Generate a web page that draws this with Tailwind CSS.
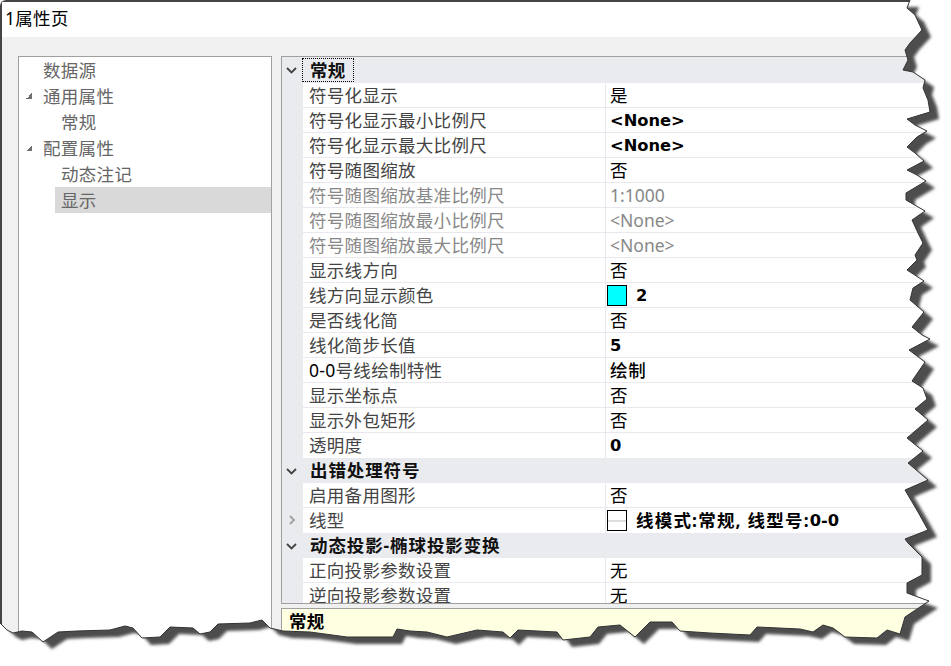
<!DOCTYPE html>
<html lang="zh">
<head>
<meta charset="UTF-8" />
<title>1属性页</title>
<script src="https://cdn.jsdelivr.net/npm/@tailwindcss/browser@4"></script>
</head>
<body class="bg-white">
<div class="relative w-[951px] h-[666px] overflow-hidden font-['Noto_Sans','Noto_Sans_CJK_SC',sans-serif] text-[17.5px] tracking-[0.3px] leading-[25px] text-[#333]">
  <div class="w-[951px] h-[666px] flex flex-col border-l-2 border-t-2 border-[#444] rounded-tl-md">
    <!-- title -->
    <div class="h-[35px] shrink-0 bg-white pl-[3px] pt-[4px] text-black">1属性页</div>
    <!-- body -->
    <div class="flex-1 bg-[#f0f0f0] pl-[16px] pt-[19px] flex gap-[9px]">
      <!-- tree -->
      <div class="w-[254px] h-[600px] shrink-0 bg-white border border-[#a0a0a0] text-[#666] leading-[27px]">
        <div class="h-[26px] pl-[24px]">数据源</div>
        <div class="h-[26px] pl-[24px] relative"><span class="absolute left-[7px] top-[10px] w-[6px] h-[6px] bg-[linear-gradient(135deg,transparent_50%,#707070_50%)]"></span>通用属性</div>
        <div class="h-[26px] pl-[42px]">常规</div>
        <div class="h-[26px] pl-[24px] relative"><span class="absolute left-[7px] top-[10px] w-[6px] h-[6px] bg-[linear-gradient(135deg,transparent_50%,#707070_50%)]"></span>配置属性</div>
        <div class="h-[26px] pl-[42px]">动态注记</div>
        <div class="h-[26px] ml-[36px] pl-[6px] bg-[#d9d9d9]">显示</div>
      </div>
      <!-- grid + description -->
      <div class="w-[660px] shrink-0 flex flex-col">
        <div class="h-[548px] bg-[#e9ebef] border border-[#a0a0a0] overflow-hidden text-[#444]">
          <div class="h-[26px] flex items-center font-bold text-[#111]"><svg class="w-[20px] h-[10px]" viewBox="0 0 20 10"><path d="M5 3l4.500 4.500 4.500-4.500" fill="none" stroke="#444" stroke-width="1.800"/></svg><span class="border border-dotted border-black h-[24px] px-[7px] leading-[23px]">常规</span></div>
          <div class="ml-[21px] bg-white">
            <div class="h-[25px] flex border-b border-[#e8e8ee]"><div class="w-[302px] pl-[6px]">符号化显示</div><div class="border-l border-[#e8e8ee] pl-[4px] text-black">是</div></div>
            <div class="h-[25px] flex border-b border-[#e8e8ee]"><div class="w-[302px] pl-[6px]">符号化显示最小比例尺</div><div class="border-l border-[#e8e8ee] pl-[4px] text-black font-bold font-['DejaVu_Sans'] text-[16.3px] tracking-normal">&lt;None&gt;</div></div>
            <div class="h-[25px] flex border-b border-[#e8e8ee]"><div class="w-[302px] pl-[6px]">符号化显示最大比例尺</div><div class="border-l border-[#e8e8ee] pl-[4px] text-black font-bold font-['DejaVu_Sans'] text-[16.3px] tracking-normal">&lt;None&gt;</div></div>
            <div class="h-[25px] flex border-b border-[#e8e8ee]"><div class="w-[302px] pl-[6px]">符号随图缩放</div><div class="border-l border-[#e8e8ee] pl-[4px] text-black">否</div></div>
            <div class="h-[25px] flex border-b border-[#e8e8ee] text-[#888]"><div class="w-[302px] pl-[6px]">符号随图缩放基准比例尺</div><div class="border-l border-[#e8e8ee] pl-[4px] tracking-normal">1:1000</div></div>
            <div class="h-[25px] flex border-b border-[#e8e8ee] text-[#888]"><div class="w-[302px] pl-[6px]">符号随图缩放最小比例尺</div><div class="border-l border-[#e8e8ee] pl-[4px] tracking-normal">&lt;None&gt;</div></div>
            <div class="h-[25px] flex border-b border-[#e8e8ee] text-[#888]"><div class="w-[302px] pl-[6px]">符号随图缩放最大比例尺</div><div class="border-l border-[#e8e8ee] pl-[4px] tracking-normal">&lt;None&gt;</div></div>
            <div class="h-[25px] flex border-b border-[#e8e8ee]"><div class="w-[302px] pl-[6px]">显示线方向</div><div class="border-l border-[#e8e8ee] pl-[4px] text-black">否</div></div>
            <div class="h-[25px] flex border-b border-[#e8e8ee]"><div class="w-[302px] pl-[6px]">线方向显示颜色</div><div class="border-l border-[#e8e8ee] pl-[1px] flex items-center text-black font-bold font-['DejaVu_Sans'] text-[16.3px]"><span class="w-[20px] h-[21px] bg-[#00ffff] border border-black mr-[9px]"></span>2</div></div>
            <div class="h-[25px] flex border-b border-[#e8e8ee]"><div class="w-[302px] pl-[6px]">是否线化简</div><div class="border-l border-[#e8e8ee] pl-[4px] text-black">否</div></div>
            <div class="h-[25px] flex border-b border-[#e8e8ee]"><div class="w-[302px] pl-[6px]">线化简步长值</div><div class="border-l border-[#e8e8ee] pl-[4px] text-black font-bold font-['DejaVu_Sans'] text-[16.3px]">5</div></div>
            <div class="h-[25px] flex border-b border-[#e8e8ee]"><div class="w-[302px] pl-[6px]"><span class="text-black">0-0</span>号线绘制特性</div><div class="border-l border-[#e8e8ee] pl-[4px] text-black font-medium tracking-[0.7px]">绘制</div></div>
            <div class="h-[25px] flex border-b border-[#e8e8ee]"><div class="w-[302px] pl-[6px]">显示坐标点</div><div class="border-l border-[#e8e8ee] pl-[4px] text-black">否</div></div>
            <div class="h-[25px] flex border-b border-[#e8e8ee]"><div class="w-[302px] pl-[6px]">显示外包矩形</div><div class="border-l border-[#e8e8ee] pl-[4px] text-black">否</div></div>
            <div class="h-[25px] flex"><div class="w-[302px] pl-[6px]">透明度</div><div class="border-l border-[#e8e8ee] pl-[4px] text-black font-bold font-['DejaVu_Sans'] text-[16.3px]">0</div></div>
          </div>
          <div class="h-[25px] flex items-center font-bold text-[#111] tracking-[0.9px]"><svg class="w-[20px] h-[10px]" viewBox="0 0 20 10"><path d="M5 3l4.500 4.500 4.500-4.500" fill="none" stroke="#444" stroke-width="1.800"/></svg><span class="pl-[8px]">出错处理符号</span></div>
          <div class="ml-[21px] bg-white">
            <div class="h-[25px] flex border-b border-[#e8e8ee]"><div class="w-[302px] pl-[6px]">启用备用图形</div><div class="border-l border-[#e8e8ee] pl-[4px] text-black">否</div></div>
            <div class="h-[25px] flex relative"><svg class="absolute left-[-21px] top-[7px] w-[21px] h-[10px]" viewBox="0 0 21 10"><path d="M8 1l4 4-4 4" fill="none" stroke="#a0a0a0" stroke-width="1.800"/></svg><div class="w-[302px] pl-[6px]">线型</div><div class="border-l border-[#e8e8ee] pl-[1px] flex items-center text-black font-bold tracking-[1.2px]"><span class="w-[20px] h-[21px] border border-black mr-[9px] flex items-center"><span class="w-full h-[2px] bg-[#ddd]"></span></span>线模式:常规, 线型号:<span class="font-['DejaVu_Sans'] text-[16.3px] tracking-normal">0-0</span></div></div>
          </div>
          <div class="h-[25px] flex items-center font-bold text-[#111] tracking-[0.9px]"><svg class="w-[20px] h-[10px]" viewBox="0 0 20 10"><path d="M5 3l4.500 4.500 4.500-4.500" fill="none" stroke="#444" stroke-width="1.800"/></svg><span class="pl-[8px]">动态投影-椭球投影变换</span></div>
          <div class="ml-[21px] bg-white">
            <div class="h-[25px] flex border-b border-[#e8e8ee]"><div class="w-[302px] pl-[6px]">正向投影参数设置</div><div class="border-l border-[#e8e8ee] pl-[4px] text-black">无</div></div>
            <div class="h-[25px] flex"><div class="w-[302px] pl-[6px]">逆向投影参数设置</div><div class="border-l border-[#e8e8ee] pl-[4px] text-black">无</div></div>
          </div>
        </div>
        <div class="mt-[4px] h-[40px] bg-[#ffffe1] border border-[#a0a0a0] pl-[7px] font-bold text-black">常规</div>
      </div>
    </div>
  </div>
  <!-- torn paper edge over the window -->
  <svg class="absolute left-0 top-0" width="951" height="666" viewBox="0 0 951 666">
    <defs>
      <path id="edge" d="M0 0H910L907 8L915 15L922 30L910 43L905 50L908 60L903 70L913 72L925 80L923 88L928 100L930 112L907 119L915 125L927 131L917 137L907 147L915 153L924 161L907 170L917 175L926 181L906 193L906 200L925 211L912 220L918 233L923 243L915 255L917 260L907 270L924 281L913 288L910 300L924 312L912 327L922 335L930 339L909 350L925 362L912 381L923 388L927 399L915 409L928 420L907 438L923 451L908 463L928 480L905 490L918 512L928 530L905 539L908 543L922 557L922 575L907 583L907 593L929 601L905 617L900 634L887 630L877 638L845 637L833 628L823 625L813 632L800 629L757 627L750 635L710 633L680 631L672 622L650 622L635 637L620 625L598 627L590 637L563 640L557 632L518 630L510 638L503 632L477 630L447 637L427 632L410 631L397 629L393 637L370 637L347 637L310 632L283 631L270 628L262 620L250 623L218 624L210 632L200 634L193 628L170 627L160 637L142 638L133 628L125 626L110 630L77 631L58 632L43 642L32 632L22 631L13 633L7 630L0 623Z"/>
      <clipPath id="outside"><path clip-rule="evenodd" d="M0 0H951V666H0Z M0 0H910L907 8L915 15L922 30L910 43L905 50L908 60L903 70L913 72L925 80L923 88L928 100L930 112L907 119L915 125L927 131L917 137L907 147L915 153L924 161L907 170L917 175L926 181L906 193L906 200L925 211L912 220L918 233L923 243L915 255L917 260L907 270L924 281L913 288L910 300L924 312L912 327L922 335L930 339L909 350L925 362L912 381L923 388L927 399L915 409L928 420L907 438L923 451L908 463L928 480L905 490L918 512L928 530L905 539L908 543L922 557L922 575L907 583L907 593L929 601L905 617L900 634L887 630L877 638L845 637L833 628L823 625L813 632L800 629L757 627L750 635L710 633L680 631L672 622L650 622L635 637L620 625L598 627L590 637L563 640L557 632L518 630L510 638L503 632L477 630L447 637L427 632L410 631L397 629L393 637L370 637L347 637L310 632L283 631L270 628L262 620L250 623L218 624L210 632L200 634L193 628L170 627L160 637L142 638L133 628L125 626L110 630L77 631L58 632L43 642L32 632L22 631L13 633L7 630L0 623Z"/></clipPath>
      <filter id="blur" x="-5%" y="-5%" width="110%" height="110%"><feGaussianBlur stdDeviation="1.500"/></filter>
    </defs>
    <g clip-path="url(#outside)">
      <rect width="951" height="666" fill="#fff"/>
      <use href="#edge" transform="translate(9 7)" fill="#4d4d4d" filter="url(#blur)"/>
    </g>
    <path d="M910 0L907 8L915 15L922 30L910 43L905 50L908 60L903 70L913 72L925 80L923 88L928 100L930 112L907 119L915 125L927 131L917 137L907 147L915 153L924 161L907 170L917 175L926 181L906 193L906 200L925 211L912 220L918 233L923 243L915 255L917 260L907 270L924 281L913 288L910 300L924 312L912 327L922 335L930 339L909 350L925 362L912 381L923 388L927 399L915 409L928 420L907 438L923 451L908 463L928 480L905 490L918 512L928 530L905 539L908 543L922 557L922 575L907 583L907 593L929 601L905 617L900 634L887 630L877 638L845 637L833 628L823 625L813 632L800 629L757 627L750 635L710 633L680 631L672 622L650 622L635 637L620 625L598 627L590 637L563 640L557 632L518 630L510 638L503 632L477 630L447 637L427 632L410 631L397 629L393 637L370 637L347 637L310 632L283 631L270 628L262 620L250 623L218 624L210 632L200 634L193 628L170 627L160 637L142 638L133 628L125 626L110 630L77 631L58 632L43 642L32 632L22 631L13 633L7 630L0 623" fill="none" stroke="#333" stroke-width="1"/>
  </svg>
</div>
</body>
</html>
